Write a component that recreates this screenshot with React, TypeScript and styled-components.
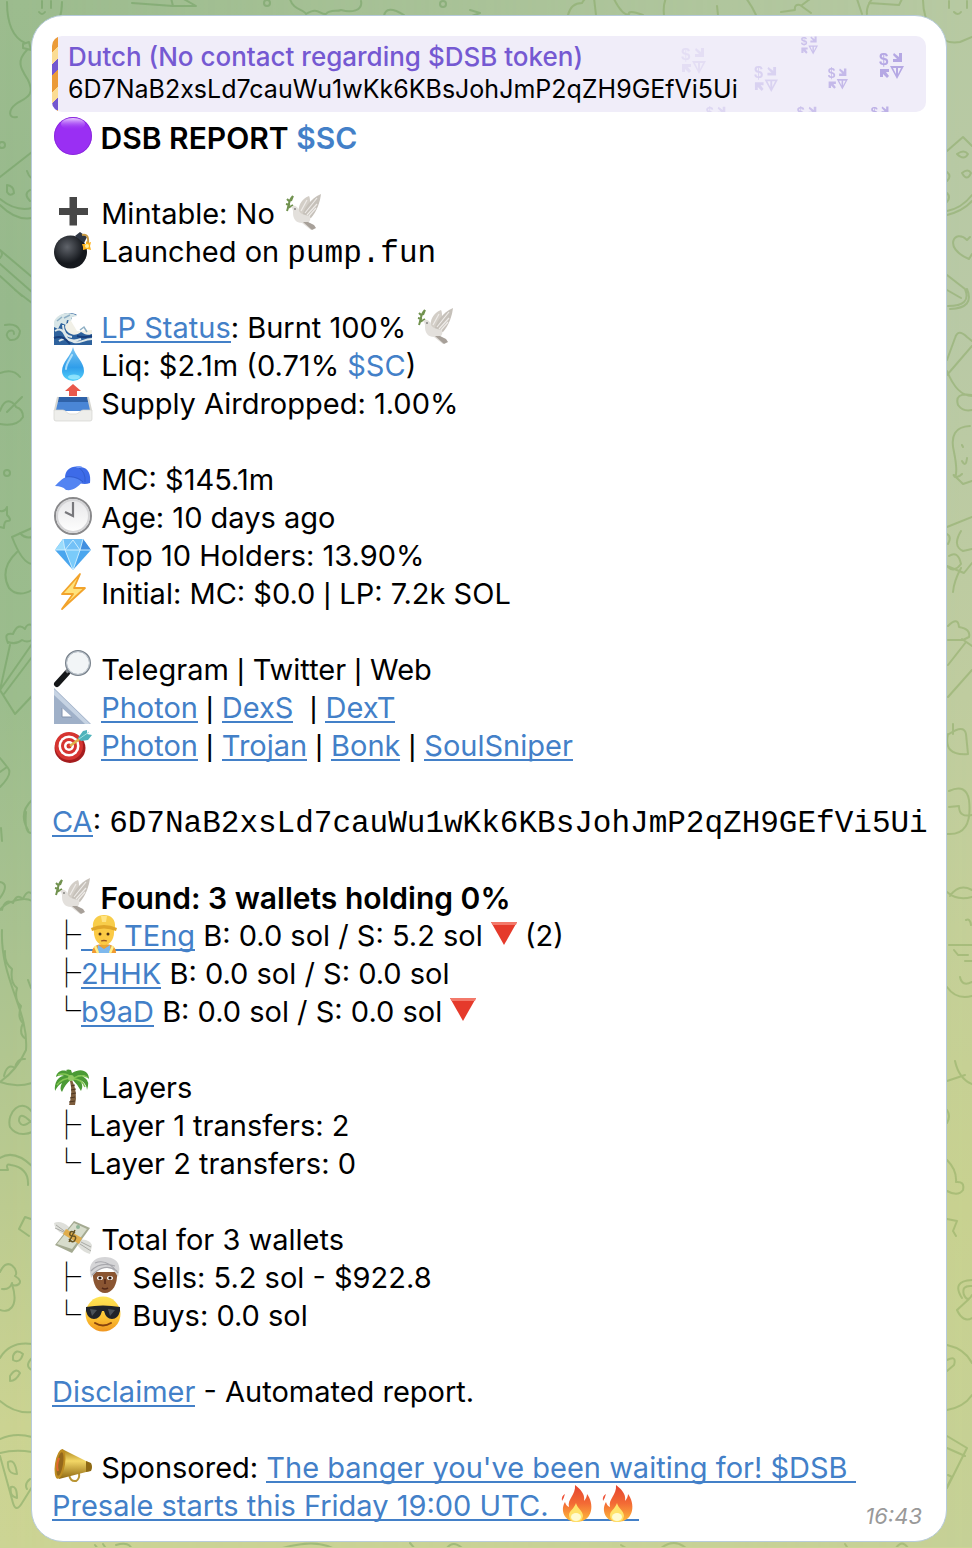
import React from "react";
import styled, { createGlobalStyle } from "styled-components";

const GlobalStyle = createGlobalStyle`
  *, *::before, *::after { box-sizing: border-box; }
  html, body, #root { min-height: 100%; }
  body { margin: 0; background: #cbd494; }
`;

const Chat = styled.main`
  position: relative;
  padding: 15px 25px 5px 31px;
  overflow: hidden;
  background: linear-gradient(180deg, #9cbc8e 0%, #97b98c 20%, #9cbd8d 45%, #a8c290 60%, #bccb90 78%, #cbd392 92%, #ccd494 100%);
  font-family: Inter, "Noto Sans", sans-serif;
  color: #000;
  &::before {
    content: "";
    position: absolute;
    inset: 0;
    background: linear-gradient(180deg, #b7c9a2 0%, #b9c9a6 20%, #bfcc9f 45%, #c4cf98 60%, #c8d190 78%, #c5d096 100%);
    mask-image: linear-gradient(90deg, transparent, #000);
  }
`;

const Doodles = styled.svg`
  position: absolute;
  top: 0;
  ${(p: { $side: "left" | "right" }) => p.$side}: 0;
  width: 486px;
  height: 1548px;
  fill: none;
  stroke: ${(p) => (p.$side === "left" ? "#5f9350" : "#7a9f50")};
  stroke-opacity: 0.38;
  stroke-width: 2;
  stroke-linecap: round;
  stroke-linejoin: round;
`;

const Bubble = styled.article`
  position: relative;
  padding: 20px 20px 12px;
  border: 1px solid #b7cbdc;
  border-radius: 32px;
  background: #fff;
`;

const Quote = styled.blockquote`
  position: relative;
  margin: 0 0 7px;
  padding: 5px 16px 7px;
  overflow: hidden;
  border-radius: 10px;
  background: #f0edf9;
  font-size: 25px;
  line-height: 32px;
  white-space: nowrap;
  &::before {
    content: "";
    position: absolute;
    inset: 0 auto 0 0;
    width: 6px;
    background: repeating-linear-gradient(135deg, #eb9b38 0 12px, #fbdd94 12px 20px, #7357d0 20px 28px);
  }
`;

const QuoteArt = styled.svg`
  position: absolute;
  top: 0;
  right: 0;
  width: 260px;
  height: 76px;
  font: 700 17px "Liberation Sans", sans-serif;
`;

const QuoteName = styled.div`
  position: relative;
  color: #7559d2;
  font-size: 26px;
  font-weight: 500;
`;

const QuoteText = styled.div`
  position: relative;
`;

const Section = styled.section`
  margin-bottom: 38px;
  font-size: 29px;
  line-height: 38px;
  &:last-of-type { margin-bottom: 0; }
`;

const Line = styled.p<{ $bold?: boolean }>`
  margin: 0;
  min-height: 38px;
  white-space: pre-wrap;
  font-size: ${(p) => (p.$bold ? 30 : 29)}px;
  font-weight: ${(p) => (p.$bold ? 600 : 400)};
`;

const AddressLine = styled(Line)`
  white-space: nowrap;
`;

const Link = styled.a<{ $plain?: boolean }>`
  color: #4380c8;
  text-decoration: none;
  box-decoration-break: clone;
  background: ${(p) =>
    p.$plain ? "none" : "linear-gradient(#4380c8, #4380c8) 0 calc(100% - 2px) / 100% 2px no-repeat"};
`;

const Code = styled.code`
  font-family: "Liberation Mono", monospace;
  font-size: 31px;
  line-height: 1;
`;

const Branch = styled.span`
  font-family: "Noto Sans CJK SC", sans-serif;
  font-weight: 300;
  line-height: 1;
`;

const Bar = styled.span`
  font-family: "Liberation Sans", sans-serif;
  line-height: 1;
`;

const Glyph = styled.svg<{ $nested?: boolean; $narrow?: boolean }>`
  width: ${(p) => (p.$narrow ? 26 : 41)}px;
  height: 38px;
  margin-top: -1px;
  margin-left: ${(p) => (p.$nested ? 2 : 0)}px;
  vertical-align: top;
  overflow: visible;
`;

const Time = styled.time`
  display: block;
  margin-top: -22px;
  padding-right: 4px;
  color: #999;
  font-size: 22px;
  font-style: italic;
  line-height: 26px;
  text-align: right;
`;

const art: Record<string, React.ReactNode> = {
  purple: (
    <>
      <circle cx="21" cy="18" r="19" fill="#9a2ff3" />
      <circle cx="21" cy="18" r="18.5" fill="none" stroke="#7f22cf" strokeOpacity=".6" />
      <ellipse cx="21" cy="6" rx="12" ry="6" fill="url(#shine)" />
    </>
  ),
  plus: <path d="M17.5 3h7.5v11h11v7H25v10.500h-7.500V21H7v-7h10.500z" fill="#474747" />,
  dove: (
    <>
      <path d="M4 17C6 12 5 7 10 2M4 5l3 3M3 10l4 1M10 2l-2 5M5 14l5-3" stroke="#71924f" strokeWidth="2" fill="none" />
      <path d="M15 21C15 12 18 5 26 2C28 6 27 12 24 22z" fill="#d3cec7" />
      <path d="M19 24C20 15 27 5 38 0C37 8 34 17 28 24z" fill="#c6c1ba" />
      <path d="M22 19L34 4M24 21L34 10M18 17L24 6M26 22l7-8" stroke="#eeebe8" strokeWidth="1.200" />
      <path d="M8 13c4-3 7 0 8 4c2 3 5 4 11 5c1 3 0 6-3 7l7 4l-3 3l-9-7c-6 0-9-4-9-10c0-3 0-4-2-6z" fill="#e3e0dc" />
      <path d="M20 28l9 8l4-2l-2-3l-6-3z" fill="#a7a099" />
      <circle cx="12" cy="15" r=".8" fill="#444" />
    </>
  ),
  bomb: (
    <>
      <circle cx="18.500" cy="20" r="16.500" fill="url(#bomb)" />
      <path d="M23 4l5-4l7 5l-3 6z" fill="#303743" />
      <path d="M30 3q7-2 6 8" stroke="#c99b45" strokeWidth="2" fill="none" />
      <path d="M34 9l2 2l3-1l-1 4l1 4l-4-1l-4 1v-3l-1-3h4z" fill="#ffb31c" />
      <circle cx="35" cy="14" r="2" fill="#fff0a0" />
    </>
  ),
  wave: (
    <>
      <path d="M2 14C5 6 16 2 25 8l-5 1l-1 4l6 10l15-1v15H2z" fill="#f1f0e7" />
      <path d="M2 16C5 7 16 2 25 7c-4 1-6 2-5 4c-3 0-4 2-4 4c-4 1-4 6 1 10c5 3 8 2 12-1c4 2 5 4 11 2v11H2z" fill="#2e629d" />
      <path d="M2 14C5 6 16 2 25 8l-5 1l-1 4l-4-1l-1 5l-5-2l-3 6l-4-2z" fill="#d8e6e8" />
      <path d="M3 23c5-3 8-1 10 4s8 7 16 4M7 33c6-4 9-1 15 1s9-3 18-3M11 17c0 7 3 11 9 12" stroke="#dfe8e9" strokeWidth="2" fill="none" />
      <path d="M2 30c8-3 12 1 16 6M25 28c5 2 8 1 15 0" stroke="#173e7c" strokeWidth="2" fill="none" />
      <path d="M5 13l5-4M12 10l6-3M28 22l4-3l3 5" stroke="#8fb0c5" strokeWidth="1.500" fill="none" />
    </>
  ),
  drop: (
    <>
      <path d="M21 1C19 10 10 16 10 25a11 10 0 0 0 22 0C32 16 23 10 21 1z" fill="url(#drop)" />
      <path d="M20 9c-3 6-6 9-6 14" stroke="#d6f4ff" strokeWidth="2" strokeOpacity=".7" fill="none" strokeLinecap="round" />
      <ellipse cx="22" cy="31" rx="6" ry="2.500" fill="#a8f0ff" opacity=".7" />
    </>
  ),
  outbox: (
    <>
      <path d="M6 13h30l3 14H3z" fill="#4a86d6" />
      <path d="M6 13h30v5H6z" fill="#2f62a8" />
      <path d="M6 13L3 26M36 13l3 13" stroke="#d7d7d2" strokeWidth="2" />
      <path d="M2 26h9c3 0 4 4 7 4h6c3 0 4-4 7-4h9v9q0 2-2 2H4q-2 0-2-2z" fill="#eeeeeb" stroke="#d2d2ce" strokeWidth=".7" />
      <path d="M21 0l8 7h-4v5h-8V7h-4z" fill="#e9594c" />
    </>
  ),
  cap: (
    <>
      <path d="M13 18C13 9 20 5 29 7c8 1 10 8 9 16c-5 2-10 1-14-2z" fill="#3d6be8" />
      <path d="M3 26c4-4 7-8 12-9c7 0 12 2 15 5c-4 5-9 9-16 8c-3-3-6-4-11-4z" fill="#5384f2" />
      <path d="M14 17c7-1 13 1 17 5M26 7q8 5 7 15" stroke="#2b53bb" strokeOpacity=".6" fill="none" />
      <ellipse cx="27" cy="7" rx="3" ry="1" fill="#779cf8" />
    </>
  ),
  clock: (
    <>
      <circle cx="21" cy="18" r="18" fill="url(#clock)" stroke="#89898b" strokeWidth="2" />
      <circle cx="21" cy="18" r="16" fill="none" stroke="#d5d5d7" strokeWidth="2" />
      <path d="M21 4v14l-8-4" stroke="#77777b" strokeWidth="2.200" fill="none" />
    </>
  ),
  gem: (
    <>
      <path d="M11 3h20l8 11L21 34L3 14z" fill="#4aa6ee" />
      <path d="M11 3l-8 11h10z" fill="#9bdcfc" />
      <path d="M11 3h20l-3 11H13z" fill="#73c1f7" />
      <path d="M31 3l8 11H28z" fill="#428fe0" />
      <path d="M13 14h15l-7 20z" fill="#7acbfa" />
      <path d="M3 14h36M11 3l2 11l8 20l7-20l3-11M13 14L21 4l7 10" stroke="#d2f1ff" strokeWidth=".9" fill="none" />
    </>
  ),
  bolt: (
    <path d="M28 0L10 20h11L10 35L33 14H22z" fill="#ffe27a" stroke="#f2a32b" strokeWidth="1.800" strokeLinejoin="round" />
  ),
  lens: (
    <>
      <path d="M5 34L15 23" stroke="#151719" strokeWidth="6" strokeLinecap="round" />
      <path d="M14 22l4-3" stroke="#83878c" strokeWidth="4" />
      <circle cx="26" cy="13" r="12" fill="#f2f5f7" stroke="#77808a" strokeWidth="2" />
      <circle cx="26" cy="13" r="11.500" fill="none" stroke="#c5cdd5" />
    </>
  ),
  ruler: (
    <>
      <path fillRule="evenodd" d="M2 0l37 36H2zM10 20v9h10z" fill="#9fb0c8" />
      <path d="M2 1l36 35h-5L2 7z" fill="#c6d3e3" />
      <path d="M10 20v9h10" stroke="#8192ac" fill="none" />
    </>
  ),
  target: (
    <>
      <ellipse cx="18" cy="22" rx="15.500" ry="15" fill="#a51c1e" />
      <circle cx="17" cy="20" r="14" fill="#d63430" />
      <circle cx="17" cy="20" r="10.500" fill="#fff" />
      <circle cx="17" cy="20" r="8" fill="#d63430" />
      <circle cx="17" cy="20" r="5" fill="#fff" />
      <circle cx="17" cy="20" r="2.500" fill="#d63430" />
      <path d="M18 20l12-9" stroke="#ddb24a" strokeWidth="2.500" />
      <path d="M26 12l5-7l4-1v4l5 1l-4 5l-7 1z" fill="#4eb3bb" />
      <path d="M27 13L37 6" stroke="#9be0df" />
    </>
  ),
  worker: (
    <>
      <path d="M9 37c0-6 4-9 12-9s12 3 12 9z" fill="#f19a2f" />
      <path d="M15 29l6 4l6-4l1 8H14z" fill="#7db8ed" />
      <path d="M12 30l3 7M30 30l-3 7" stroke="#fff08a" strokeWidth="2.500" />
      <path d="M18 24h6v6l-3 2l-3-2z" fill="#e6a833" />
      <path d="M11 12h20c1 10-3 17-10 17S10 22 11 12z" fill="#fbca45" />
      <path d="M10 12C9 3 14-1 21-1s12 4 11 13q-11-4-22 0z" fill="#f8cd4a" />
      <path d="M8 12q13-6 26 0l-1 3q-12-5-24 0z" fill="#e0a629" />
      <path d="M18 0h6l-1 6h-4z" fill="#ffe483" />
      <circle cx="17" cy="18" r="1.500" fill="#4d3014" />
      <circle cx="25" cy="18" r="1.500" fill="#4d3014" />
      <path d="M18 25q3-1 6 0" stroke="#9d5823" strokeWidth="1.300" fill="none" />
    </>
  ),
  down: (
    <>
      <path d="M0 6h26L13 29z" fill="#e53a2b" />
      <path d="M0 6h26l-1 3H2z" fill="#f3796a" />
    </>
  ),
  palm: (
    <>
      <path d="M20 12q6 12 3 25h-6q4-12 1-24z" fill="#7d5d3d" />
      <path d="M19 18l4-1M19 22l5-1M19 26l5-1M18 30l5-1M17 34l6-1" stroke="#4f3722" />
      <path d="M20 9C15-1 5 2 4 9q4-3 8-1c-6 0-10 7-9 15q3-6 7-8c-2 4-2 7 0 9q3-8 10-13q6 6 9 12q3-5-1-11c5 2 7 7 7 10q3-9-2-12c-3-3-6-3-8-2c4-2 8-1 12 3c0-7-7-12-17-6l-1-3q-3-1-5 0z" fill="#4b9a35" />
      <path d="M6 7q8-3 14 3M5 17q5-7 15-7M22 10q7-4 13-1M21 11q9 0 12 8" stroke="#83c653" strokeWidth="1.500" fill="none" />
      <circle cx="19" cy="10" r="3" fill="#93c964" />
    </>
  ),
  money: (
    <>
      <path d="M15 16C10 14 3 11 2 3c4-2 10-1 15 4z" fill="#dedfda" />
      <path d="M27 20c6-2 13 2 13 6l-2 8c-4-1-8-3-12-8z" fill="#dedfda" />
      <path d="M4 5l11 8M3 8l11 5M28 24l11 7M29 22l10 5" stroke="#a9aaa5" strokeWidth="1" />
      <path d="M22 1l16 7L20 33L3 25z" fill="#a4aa91" />
      <path d="M22 3l13 6L20 29L5 24z" fill="#d7dccb" />
      <path d="M14 9l16 9l-3 6L11 14z" fill="#e0ad4b" />
      <path d="M23 13q-4-3-5 0t3 3t2 4t-6-1M23 10l-6 12" stroke="#655323" strokeWidth="1.500" fill="none" />
      <circle cx="26" cy="7" r="2" fill="#8fb497" />
    </>
  ),
  turban: (
    <>
      <path d="M10 14h24c1 13-5 21-12 21S9 27 10 14z" fill="#8a5532" />
      <path d="M7 14C6 4 13-1 22-1s16 5 14 15l-1 5Q29 8 22 9T8 20z" fill="#d5d5d7" />
      <path d="M8 13Q17 3 32 8M12 5q12-5 23 10M9 17Q22 4 34 13" stroke="#a8a8ad" strokeWidth="1.200" fill="none" />
      <ellipse cx="17" cy="20" rx="3" ry="2" fill="#fff" />
      <ellipse cx="27" cy="20" rx="3" ry="2" fill="#fff" />
      <circle cx="17" cy="20" r="1.600" fill="#2d160c" />
      <circle cx="27" cy="20" r="1.600" fill="#2d160c" />
      <path d="M22 21v5M19 30q3 2 6 0" stroke="#542918" strokeWidth="1.600" fill="none" />
    </>
  ),
  cool: (
    <>
      <circle cx="20" cy="18" r="17.500" fill="url(#face)" />
      <path d="M3 11q17-3 34 0v4q-2 8-8 8t-8-8h-2q-2 8-8 8t-8-8z" fill="#20242a" />
      <path d="M7 13l7 1l-5 6zM25 13l7 1l-5 6z" fill="#667078" opacity=".6" />
      <path d="M12 27q8 5 16 0" stroke="#87430d" strokeWidth="2" fill="none" strokeLinecap="round" />
    </>
  ),
  horn: (
    <>
      <path d="M17 26q1 8 7 7q4-2 3-8" stroke="#b99432" strokeWidth="2" fill="none" />
      <path d="M10 1L38 15q3 4 0 8L7 31z" fill="url(#gold)" />
      <path d="M34 13l5 2q2 4 0 8l-5 1z" fill="#8f6a14" />
      <ellipse cx="8" cy="16" rx="5" ry="15" transform="rotate(9 8 16)" fill="#be8d21" />
      <ellipse cx="8" cy="16" rx="3" ry="12" transform="rotate(9 8 16)" fill="#94681c" />
      <path d="M7 10q-3 7-1 13" stroke="#e2672e" strokeWidth="2" fill="none" />
    </>
  ),
  fire: (
    <>
      <path d="M18-1c8 6 10 11 9 16c2-2 3-5 3-7c7 9 7 27-10 28C7 36 3 24 8 16q1 4 4 5C10 13 19 9 18-1z" fill="url(#fire)" />
      <path d="M5 15q-1-5 3-7q-1 4-3 7z" fill="#ee5136" />
      <path d="M19 17c1 5 7 8 7 13q-1 6-7 6q-7-1-7-7c0-4 5-6 7-12z" fill="#ffe36a" />
      <ellipse cx="19" cy="31" rx="5" ry="4" fill="#fffbd0" />
    </>
  ),
};

const Emoji = ({ name, nested }: { name: string; nested?: boolean }) => (
  <Glyph
    aria-hidden="true"
    viewBox={name === "down" ? "0 0 26 38" : "0 0 41 38"}
    $nested={nested}
    $narrow={name === "down"}
  >
    {art[name]}
  </Glyph>
);

const Stamp = ({ x, y, size, opacity }: { x: number; y: number; size: number; opacity: number }) => (
  <g transform={`translate(${x} ${y}) scale(${size / 26})`} fill="#a797df" opacity={opacity}>
    <text x="1" y="14">$</text>
    <path d="M16 2l5 4V2h3v9h-9V8h4l-4-4zM2 18h9v3H8l3 4l-2 2l-4-4v3H2z" />
    <path fillRule="evenodd" d="M12 15h14l-7 13zM15 17l3 6v-6zM20 17v6l3-6z" />
  </g>
);

const LeftDoodles = () => (
  <Doodles $side="left" viewBox="0 0 486 1548" aria-hidden="true">
    <path d="M25 43C10 36 7 18 7 2M62 2c0 15-4 24-12 32M42 1v7M51 1v7M39 12q3 4 6 0M23 44l6-2l2 8l-8-2zM27 50c-12 12-5 20 1 30c8 16-3 18-12 24c-8 6-8 15 1 13" />
    <path d="M132 3l41 3l-2-8M173 6h23L175-6M290-1c3 11 14 10 16 15c12-8 14 1 20 0c4-5 11-2 15-4c10 3 22 1 20-9M384 16q2-12 20-1M470 10l10 3l-8 3" />
    <circle cx="267" cy="3" r="3" /><circle cx="443" cy="4" r="3" /><circle cx="2" cy="145" r="3" />
    <path d="M0 177l32-25M0 199q16 13 32 9M0 205q16 16 32 13M7 185q7 1 7 8q-4 4-7-1zM27 171q3 8 6 7M30 190q-7 4 0 11M0 250l32 27M0 264l32 28M0 276l22 20M15 290l17 13M0 250q4 4 0 8" />
    <path d="M5 325q12-2 15 6q-1 10-10 9q-6-5-1-9q5-2 5 3M0 373q13-5 20 4M0 411c6-17 15-7 16-4q7 2 7 10q-6 10-23 7M7 412l15-15" />
    <circle cx="7" cy="473" r="3" />
    <path d="M0 511q5 1 7-4v8q6 6 0 6q-3 0-3 7l-4-1M12 537l20-9M12 537q10 26 20 27M17 552q-18 17-8 36q9 10 23 2M20 533q5 6 12 4" />
    <path d="M8 643q-5-11 5-9q5-12 12-5q2-6 7-4M8 642q8 3 14-2q5 3 10 0M10 645L0 690l15 24l17-18M0 690l32-46M4 694l28-37M0 758l8 10q5 6-8 19M0 772l7-5" />
    <path d="M32 800q-14 13-4 30M26 812q-2 22 6 21M1 828l1 13M0 882q10 2 0 16M0 910C5 902 24 896 32 901M2 910q3-12 11-7q4-10 10-4q4-10 9-5" />
    <path d="M2 930C0 980 29 1010 26 1050Q17 1070 0 1082q16 6 32 1M5 951q-1 12 7 18q-2 14 5 19q-3 12 4 18q-4 12 2 17q-5 11 3 16M4 1076q3-13 11-8q2-10 10-9M28 980l3 8" />
    <path d="M32 1112c-10-15-26 0-22 15c8 12 22 5 22 5M31 1122q-12-12-12-1q3 8 12 0M0 1158q14-9 32 8M0 1170h8q-3-7 3-5q18 3 17 20M31 1219l-6-2l-6 12l10 7M0 1272c8-18 20 0 15 4c12 7-1 12-3 8c8 25-5 29-12 26M2 1289q8 1 10-6" />
    <path d="M32 1344q-22-3-32 14M0 1401q15 13 32 11M13 1356q3-8 10-2q-3 10-10 6zM10 1376q6-9 10-3q-4 8-10 8zM32 1358q-8 8 0 12M0 1439q15-7 32-2M0 1453q15-4 32-1M0 1456l13 47q3 10 9 0l10-16M8 1462q7-4 9 12q-10 0-9-12zM11 1487q6-2 6 11q-8-2-6-11zM30 1479q-6 5-3 10" />
    <path d="M95 1545l4 5M103 1544l4 6M116 1545q14-4 16 5M276 1550q40-13 60 0M410 1543l6 7M447 1548q6-8 15 0" />
  </Doodles>
);

const RightDoodles = () => (
  <Doodles $side="right" viewBox="486 0 486 1548" aria-hidden="true">
    <path d="M568 15q3-12 14-12q5-9 12-5l2 17M614-1q8 16 15 16q-2-6 14 0M664 15Q660-20 710-20q30 0 46 35M717 6l1 9M781 12l14-2q-1-6 5-5l11 8M802 5l8-6M857-1l5 15M872-1q-6 8-5 15M869 3l30 2l3-6" />
    <path d="M923 0c0 22 14 46 37 42l12-5M949 1v7M967 1v7M954 12q4 4 7 0M947 151l16-14l9 9M957 154q7-5 11 0q-4 7-11 0zM962 173q6-5 9 0q-4 9-9 0M947 172q5 4 0 9M947 193q4 4 0 9M947 211q15-3 25-16M947 215q16-4 25-14M970 237l-3 3c-12-12-25 8 2 19l3-5" />
    <path d="M947 275l18 14q7 17-17 17M947 290l14 8M967 289q8 19-17 20M947 360l8-22q3-10 12-1l5 4M947 375l25-29M947 371q10 25 25 25M972 395q-18-3-14 10q5 7 14 5M970 426q-22 1-16 26q4 20 1 25q-5-6 8 7l9-3M962 445l1 2M962 461q4 7 5-3M954 475q3 4 8-1" />
    <path d="M947 527l25-10M947 566l17 7l8-10M961 531q-9 15 2 20l9-2M947 534q5 3 1 10M949 556q9-6 12 8q-7 9-13 3M961 568q-7 13-8 24M948 626q10-10 11 1q12 2 10 10l-6 3h-15M962 639l10 7M948 665l18-23M948 697l24-27M953 724v10M949 734q15-10 17 0l2 20q-25 2-20-20M949 791q17-8 20 9q4 36-22 34M949 807l10-1q0 12 13 9" />
    <path d="M947 892q10 9 25 5M950 896q9-13 22-6M966 920q4-2 5 5M949 945h23M954 950l4 5h10M965 961h7M960 977q2 10 12 5M947 987q9 13 25 9M955 1061q4 18 17 23M947 1081l18-6M947 1110q4 6 0 13M947 1160q10 10 9 22q9-1 7 8q-5 7-16 1M947 1219l10 2l-4 10l3 5M962 1298q-11-17 10-18M972 1286q-11-1-8 9q4 8 8 0M957 1310l12-11M957 1310q6 13 15 8" />
    <path d="M947 1345q18 4 25 18M947 1410q17-3 25-15M947 1360q10-5 7 5l-7 6M947 1436l20 12l-20 40M947 1448l18 8M948 1475l4 2l-4 8M621 1545l8 5M660 1549q14-12 27 0M845 1544l4 6M896 1548q6-9 12 0" />
  </Doodles>
);

const Gradients = styled.svg`
  display: block;
  width: 0;
  height: 0;
`;

const Defs = () => (
  <Gradients aria-hidden="true">
    <defs>
      <linearGradient id="shine" x2="0" y2="1"><stop stopColor="#ead0ff" /><stop offset="1" stopColor="#9a2ff3" stopOpacity="0" /></linearGradient>
      <radialGradient id="bomb" cx=".4" cy=".35"><stop stopColor="#60646b" /><stop offset="1" stopColor="#15181d" /></radialGradient>
      <linearGradient id="drop" x2="0" y2="1"><stop stopColor="#7cc6f2" /><stop offset=".6" stopColor="#309eea" /><stop offset="1" stopColor="#54d3fb" /></linearGradient>
      <linearGradient id="clock" x2="0" y2="1"><stop stopColor="#e6e6e8" /><stop offset="1" stopColor="#fff" /></linearGradient>
      <linearGradient id="face" x2="0" y2="1"><stop stopColor="#ffe558" /><stop offset=".6" stopColor="#fcc332" /><stop offset="1" stopColor="#f09620" /></linearGradient>
      <linearGradient id="gold" x2="0" y2="1"><stop stopColor="#a67d18" /><stop offset=".4" stopColor="#f3d766" /><stop offset="1" stopColor="#8f6710" /></linearGradient>
      <linearGradient id="fire" x2="0" y2="1"><stop stopColor="#e5432f" /><stop offset=".5" stopColor="#f36b35" /><stop offset="1" stopColor="#ffbd3a" /></linearGradient>
    </defs>
  </Gradients>
);

export default function App() {
  return (
    <>
      <GlobalStyle />
      <Chat>
        <Defs />
        <LeftDoodles />
        <RightDoodles />
        <Bubble>
          <Quote>
            <QuoteArt viewBox="0 0 260 76" aria-hidden="true">
              <Stamp x={14} y={10} size={26} opacity={0.16} />
              <Stamp x={134} y={-1} size={18} opacity={0.5} />
              <Stamp x={87} y={29} size={25} opacity={0.3} />
              <Stamp x={161} y={31} size={21} opacity={0.6} />
              <Stamp x={212} y={15} size={26} opacity={0.8} />
              <Stamp x={39} y={69} size={22} opacity={0.25} />
              <Stamp x={130} y={69} size={22} opacity={0.5} />
              <Stamp x={204} y={69} size={20} opacity={0.7} />
            </QuoteArt>
            <QuoteName>Dutch (No contact regarding $DSB token)</QuoteName>
            <QuoteText>6D7NaB2xsLd7cauWu1wKk6KBsJohJmP2qZH9GEfVi5Ui</QuoteText>
          </Quote>

          <Section>
            <Line $bold><Emoji name="purple" /> DSB REPORT <Link $plain href="#sc">$SC</Link></Line>
          </Section>
          <Section>
            <Line><Emoji name="plus" /> Mintable: No <Emoji name="dove" /></Line>
            <Line><Emoji name="bomb" /> Launched on <Code>pump.fun</Code></Line>
          </Section>
          <Section>
            <Line><Emoji name="wave" /> <Link href="#lp">LP Status</Link>: Burnt 100% <Emoji name="dove" /></Line>
            <Line><Emoji name="drop" /> Liq: $2.1m (0.71% <Link $plain href="#sc">$SC</Link>)</Line>
            <Line><Emoji name="outbox" /> Supply Airdropped: 1.00%</Line>
          </Section>
          <Section>
            <Line><Emoji name="cap" /> MC: $145.1m</Line>
            <Line><Emoji name="clock" /> Age: 10 days ago</Line>
            <Line><Emoji name="gem" /> Top 10 Holders: 13.90%</Line>
            <Line><Emoji name="bolt" /> Initial: MC: $0.0 <Bar>|</Bar> LP: 7.2k SOL</Line>
          </Section>
          <Section>
            <Line><Emoji name="lens" /> Telegram <Bar>|</Bar> Twitter <Bar>|</Bar> Web</Line>
            <Line><Emoji name="ruler" /> <Link href="#photon">Photon</Link> <Bar>|</Bar> <Link href="#dexs">DexS</Link>  <Bar>|</Bar> <Link href="#dext">DexT</Link></Line>
            <Line><Emoji name="target" /> <Link href="#photon">Photon</Link> <Bar>|</Bar> <Link href="#trojan">Trojan</Link> <Bar>|</Bar> <Link href="#bonk">Bonk</Link> <Bar>|</Bar> <Link href="#soulsniper">SoulSniper</Link></Line>
          </Section>
          <Section>
            <AddressLine><Link href="#ca">CA</Link>: <Code>6D7NaB2xsLd7cauWu1wKk6KBsJohJmP2qZH9GEfVi5Ui</Code></AddressLine>
          </Section>
          <Section>
            <Line $bold><Emoji name="dove" /> Found: 3 wallets holding 0%</Line>
            <Line><Branch>├</Branch><Link href="#teng"><Emoji name="worker" nested />TEng</Link> B: 0.0 sol / S: 5.2 sol <Emoji name="down" /> (2)</Line>
            <Line><Branch>├</Branch><Link href="#2hhk">2HHK</Link> B: 0.0 sol / S: 0.0 sol</Line>
            <Line><Branch>└</Branch><Link href="#b9ad">b9aD</Link> B: 0.0 sol / S: 0.0 sol <Emoji name="down" /></Line>
          </Section>
          <Section>
            <Line><Emoji name="palm" /> Layers</Line>
            <Line><Branch>├</Branch> Layer 1 transfers: 2</Line>
            <Line><Branch>└</Branch> Layer 2 transfers: 0</Line>
          </Section>
          <Section>
            <Line><Emoji name="money" /> Total for 3 wallets</Line>
            <Line><Branch>├</Branch><Emoji name="turban" nested /> Sells: 5.2 sol - $922.8</Line>
            <Line><Branch>└</Branch><Emoji name="cool" nested /> Buys: 0.0 sol</Line>
          </Section>
          <Section>
            <Line><Link href="#disclaimer">Disclaimer</Link> - Automated report.</Line>
          </Section>
          <Section>
            <Line><Emoji name="horn" /> Sponsored: <Link href="#sponsored">The banger you've been waiting for! $DSB Presale starts this Friday 19:00 UTC. <Emoji name="fire" /><Emoji name="fire" /></Link></Line>
          </Section>
          <Time dateTime="16:43">16:43</Time>
        </Bubble>
      </Chat>
    </>
  );
}
